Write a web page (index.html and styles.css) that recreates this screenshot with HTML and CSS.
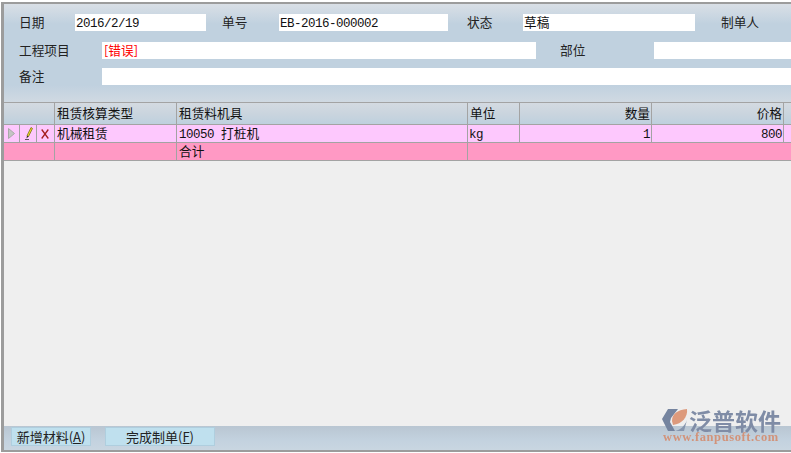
FILE: index.html
```html
<!DOCTYPE html>
<html lang="zh">
<head>
<meta charset="utf-8">
<title>租赁单</title>
<link rel="stylesheet" href="styles.css">
</head>
<body>
<div class="window">
  <section class="form">
    <div class="form-row row-1">
      <span class="label l-date">日期</span>
      <span class="field f-date"><span class="latin">2016/2/19</span></span>
      <span class="label l-no">单号</span>
      <span class="field f-no"><span class="latin">EB-2016-000002</span></span>
      <span class="label l-state">状态</span>
      <span class="field f-state">草稿</span>
      <span class="label l-maker">制单人</span>
    </div>
    <div class="form-row row-2">
      <span class="label l-wide">工程项目</span>
      <span class="field f-project error">[错误]</span>
      <span class="label l-part">部位</span>
      <span class="field f-part"></span>
    </div>
    <div class="form-row row-3">
      <span class="label l-wide">备注</span>
      <span class="field f-note"></span>
    </div>
  </section>
  <section class="table">
    <div class="tr head">
      <div class="td c-tools"></div>
      <div class="td c-type">租赁核算类型</div>
      <div class="td c-item">租赁料机具</div>
      <div class="td c-unit">单位</div>
      <div class="td c-qty">数量</div>
      <div class="td c-price">价格</div>
      <div class="td c-rest"></div>
    </div>
    <div class="tr data">
      <div class="td c-arrow"><svg class="cell-icon" width="7" height="11" viewBox="0 0 7 11"><path d="M.5 .5 L6.5 5.5 L.5 10.5 Z" fill="#c4c4c4" stroke="#a8a8a8"/></svg></div>
      <div class="td c-edit"><svg class="cell-icon" width="8" height="13" viewBox="0 0 8 13"><path d="M6 .5 L7.5 1.5 L3.5 9.5 L2 8.7 Z" fill="#f0e020" stroke="#6a6010" stroke-width=".7"/><path d="M2 8.7 L3.5 9.5 L1.5 11.5 Z" fill="#222"/><path d="M0 12.5 H4" stroke="#333" stroke-width=".8"/></svg></div>
      <div class="td c-del"><svg class="cell-icon" width="8" height="10" viewBox="0 0 8 10"><path d="M.7 .5 L7.3 9.5 M7.3 .5 L.7 9.5" stroke="#a52020" stroke-width="1.3" fill="none"/></svg></div>
      <div class="td c-type">机械租赁</div>
      <div class="td c-item"><span class="latin">10050 </span>打桩机</div>
      <div class="td c-unit"><span class="latin">kg</span></div>
      <div class="td c-qty"><span class="latin">1</span></div>
      <div class="td c-price"><span class="latin">800</span></div>
      <div class="td c-rest"></div>
    </div>
    <div class="tr total">
      <div class="td c-tools"></div>
      <div class="td c-type"></div>
      <div class="td c-item">合计</div>
      <div class="td c-fill"></div>
    </div>
  </section>
  <section class="blank"></section>
  <footer class="footer">
    <button class="btn btn-add">新增材料(<u>A</u>)</button>
    <button class="btn btn-done">完成制单(<u>F</u>)</button>
  </footer>
  <div class="logo">
    <svg class="logo-mark" width="30" height="28" viewBox="0 0 30 28">
      <path d="M2 13 L8 3 L18 3 L11 12 L10 16 L15 25 L8 25 Z" fill="#75849f"/>
      <path d="M12 15 C12 8 17 4 27 3 C28 11 22 18 13 19 Z" fill="#dd9a7c"/>
      <path d="M15 25 C20 24 25 20 27 14 L24 25 Z" fill="#8796ae"/>
    </svg>
    <div class="logo-text">
      <div class="logo-name">泛普软件</div>
      <div class="logo-url">www.fanpusoft.com</div>
    </div>
  </div>
</div>
</body>
</html>
```

FILE: styles.css
```css
* { box-sizing: border-box; }
html, body { margin: 0; padding: 0; background: #fff; overflow: hidden; }
body { width: 791px; height: 453px; font-family: "Noto Sans CJK SC", sans-serif; font-size: 12.7px; color: #111; }
.latin { font-family: "Liberation Mono", monospace; font-size: 12.5px; letter-spacing: -.5px; }
.window { position: relative; width: 790px; height: 450px; margin: 2px 0 0 1px; border: solid #9c9c9c; border-width: 2px 0 2px 3px; display: flex; flex-direction: column; overflow: hidden; }

.form { height: 98px; padding-top: 10px; background: linear-gradient(#d9dfe6 0, #c0d1df 20px, #c0d1df 81px, #d0d9e2 98px); flex: none; }
.form-row { display: flex; height: 17px; white-space: nowrap; }
.row-2 { margin-top: 11px; }
.row-3 { margin-top: 9px; }
.label { line-height: 16px; flex: none; color: #222; }
.field { background: #fff; line-height: 16px; padding-left: 1px; flex: none; }
.l-date { width: 71px; padding-left: 15px; }
.f-date { width: 131px; }
.l-no { width: 73px; padding-left: 16px; }
.f-no { width: 169px; }
.l-state { width: 75px; padding-left: 19px; }
.f-state { width: 172px; }
.l-maker { padding-left: 26px; width: 96px; }
.l-wide { width: 98px; padding-left: 15px; }
.f-project { width: 434px; padding-left: 2px; }
.error { color: #f00; }
.l-part { width: 118px; padding-left: 24px; }
.f-part { width: 137px; }
.f-note { width: 689px; }

.table { flex: none; }
.tr { display: flex; }
.td { flex: none; height: 100%; padding: 0 1px 0 2px; line-height: 16px; white-space: nowrap; border-right: 1px solid #a3a3a3; }
.head { height: 22px; border-top: 1px solid #a3a3a3; background: linear-gradient(#d4dae1, #c9d4de 55%, #bed0de); }
.head .td { line-height: 20px; }
.data { height: 18px; border-top: 1px solid #a3a3a3; background: #fdc8fd; }
.total { height: 18px; border-top: 1px solid #a3a3a3; background: #ff99c4; }
.cell-icon { display: block; }
.c-tools { width: 51px; }
.c-arrow { width: 16px; padding: 3px 0 0 4px; }
.c-edit { width: 17px; padding: 2px 0 0 5px; }
.c-del { width: 18px; padding: 4px 0 0 4px; }
.c-type { width: 122px; }
.c-item { width: 291px; }
.c-unit { width: 52px; }
.data .c-unit { padding-left: 1px; }
.c-qty { width: 132px; text-align: right; }
.c-price { width: 132px; text-align: right; }
.c-rest { width: 10px; border-right: 0; }
.c-fill { flex: 1; border-right: 0; }

.blank { flex: 1; background: #efefef; border-top: 1px solid #a3a3a3; }
.footer { flex: none; height: 24px; display: flex; align-items: flex-start; padding: 1px 0 0 7px; background: linear-gradient(#b9c6d2, #c3d2df 60%, #c9d6e1); }
.btn { appearance: none; margin: 0; font: inherit; font-size: 13px; color: #222; height: 19px; padding: 0; line-height: 17px; background: #bfe0ee; border: 1px solid #afcede; border-radius: 0; }
.btn u { text-decoration: underline; }
.btn-add { width: 80px; }
.btn-done { width: 110px; margin-left: 14px; }

.logo { position: absolute; left: 656px; top: 402px; display: flex; align-items: flex-start; filter: blur(.35px); }
.logo-mark { flex: none; }
.logo-text { margin: 2px 0 0 -27px; }
.logo-name { margin-left: 26px; font-size: 23px; line-height: 24px; font-weight: 700; color: #7f8ca6; white-space: nowrap; }
.logo-url { font-family: "Liberation Serif", serif; font-weight: 700; font-size: 12.5px; line-height: 11px; color: #d2937a; letter-spacing: .6px; white-space: nowrap; }
```
